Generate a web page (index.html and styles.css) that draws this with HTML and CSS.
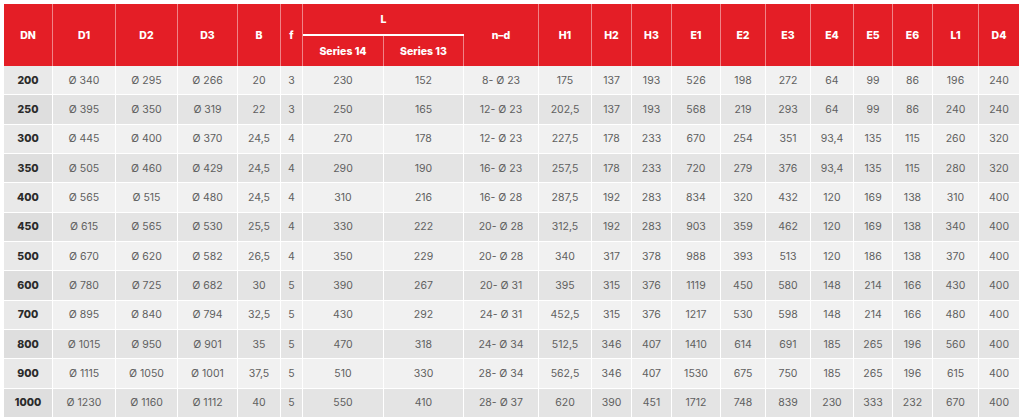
FILE: index.html
```html
<!DOCTYPE html>
<html lang="en">
<head>
<meta charset="utf-8">
<title>Dimensions table</title>
<link rel="stylesheet" href="styles.css">
</head>
<body>
<table class="dims">
  <colgroup>
    <col style="width:49px"><col style="width:63px"><col style="width:62px"><col style="width:60px"><col style="width:43px"><col style="width:22px"><col style="width:81px"><col style="width:80px"><col style="width:75px"><col style="width:53px"><col style="width:40px"><col style="width:40px"><col style="width:49px"><col style="width:45px"><col style="width:45px"><col style="width:43px"><col style="width:39px"><col style="width:40px"><col style="width:46px"><col style="width:40px">
  </colgroup>
  <thead>
    <tr class="h1">
      <th rowspan="2">DN</th><th rowspan="2">D1</th><th rowspan="2">D2</th><th rowspan="2">D3</th><th rowspan="2">B</th><th rowspan="2">f</th>
      <th colspan="2" class="group">L</th>
      <th rowspan="2">n–d</th><th rowspan="2">H1</th><th rowspan="2">H2</th><th rowspan="2">H3</th><th rowspan="2">E1</th><th rowspan="2">E2</th><th rowspan="2">E3</th><th rowspan="2">E4</th><th rowspan="2">E5</th><th rowspan="2">E6</th><th rowspan="2">L1</th><th rowspan="2" class="last">D4</th>
    </tr>
    <tr class="h2">
      <th>Series 14</th><th>Series 13</th>
    </tr>
  </thead>
  <tbody>
    <tr><td>200</td><td>Ø 340</td><td>Ø 295</td><td>Ø 266</td><td>20</td><td>3</td><td>230</td><td>152</td><td>8- Ø 23</td><td>175</td><td>137</td><td>193</td><td>526</td><td>198</td><td>272</td><td>64</td><td>99</td><td>86</td><td>196</td><td>240</td></tr>
    <tr><td>250</td><td>Ø 395</td><td>Ø 350</td><td>Ø 319</td><td>22</td><td>3</td><td>250</td><td>165</td><td>12- Ø 23</td><td>202,5</td><td>137</td><td>193</td><td>568</td><td>219</td><td>293</td><td>64</td><td>99</td><td>86</td><td>240</td><td>240</td></tr>
    <tr><td>300</td><td>Ø 445</td><td>Ø 400</td><td>Ø 370</td><td>24,5</td><td>4</td><td>270</td><td>178</td><td>12- Ø 23</td><td>227,5</td><td>178</td><td>233</td><td>670</td><td>254</td><td>351</td><td>93,4</td><td>135</td><td>115</td><td>260</td><td>320</td></tr>
    <tr><td>350</td><td>Ø 505</td><td>Ø 460</td><td>Ø 429</td><td>24,5</td><td>4</td><td>290</td><td>190</td><td>16- Ø 23</td><td>257,5</td><td>178</td><td>233</td><td>720</td><td>279</td><td>376</td><td>93,4</td><td>135</td><td>115</td><td>280</td><td>320</td></tr>
    <tr><td>400</td><td>Ø 565</td><td>Ø 515</td><td>Ø 480</td><td>24,5</td><td>4</td><td>310</td><td>216</td><td>16- Ø 28</td><td>287,5</td><td>192</td><td>283</td><td>834</td><td>320</td><td>432</td><td>120</td><td>169</td><td>138</td><td>310</td><td>400</td></tr>
    <tr><td>450</td><td>Ø 615</td><td>Ø 565</td><td>Ø 530</td><td>25,5</td><td>4</td><td>330</td><td>222</td><td>20- Ø 28</td><td>312,5</td><td>192</td><td>283</td><td>903</td><td>359</td><td>462</td><td>120</td><td>169</td><td>138</td><td>340</td><td>400</td></tr>
    <tr><td>500</td><td>Ø 670</td><td>Ø 620</td><td>Ø 582</td><td>26,5</td><td>4</td><td>350</td><td>229</td><td>20- Ø 28</td><td>340</td><td>317</td><td>378</td><td>988</td><td>393</td><td>513</td><td>120</td><td>186</td><td>138</td><td>370</td><td>400</td></tr>
    <tr><td>600</td><td>Ø 780</td><td>Ø 725</td><td>Ø 682</td><td>30</td><td>5</td><td>390</td><td>267</td><td>20- Ø 31</td><td>395</td><td>315</td><td>376</td><td>1119</td><td>450</td><td>580</td><td>148</td><td>214</td><td>166</td><td>430</td><td>400</td></tr>
    <tr><td>700</td><td>Ø 895</td><td>Ø 840</td><td>Ø 794</td><td>32,5</td><td>5</td><td>430</td><td>292</td><td>24- Ø 31</td><td>452,5</td><td>315</td><td>376</td><td>1217</td><td>530</td><td>598</td><td>148</td><td>214</td><td>166</td><td>480</td><td>400</td></tr>
    <tr><td>800</td><td>Ø 1015</td><td>Ø 950</td><td>Ø 901</td><td>35</td><td>5</td><td>470</td><td>318</td><td>24- Ø 34</td><td>512,5</td><td>346</td><td>407</td><td>1410</td><td>614</td><td>691</td><td>185</td><td>265</td><td>196</td><td>560</td><td>400</td></tr>
    <tr><td>900</td><td>Ø 1115</td><td>Ø 1050</td><td>Ø 1001</td><td>37,5</td><td>5</td><td>510</td><td>330</td><td>28- Ø 34</td><td>562,5</td><td>346</td><td>407</td><td>1530</td><td>675</td><td>750</td><td>185</td><td>265</td><td>196</td><td>615</td><td>400</td></tr>
    <tr><td>1000</td><td>Ø 1230</td><td>Ø 1160</td><td>Ø 1112</td><td>40</td><td>5</td><td>550</td><td>410</td><td>28- Ø 37</td><td>620</td><td>390</td><td>451</td><td>1712</td><td>748</td><td>839</td><td>230</td><td>333</td><td>232</td><td>670</td><td>400</td></tr>
  </tbody>
</table>
</body>
</html>
```
FILE: styles.css
```css
html, body {
  margin: 0;
  padding: 0;
  background: #ffffff;
}
body {
  padding: 4px 0 0 4px;
  font-family: "Inter", "Liberation Sans", sans-serif;
}
.dims {
  table-layout: fixed;
  width: 1015px;
  border-collapse: separate;
  border-spacing: 0;
}
.dims th {
  background: #e41e26;
  color: #ffffff;
  font-weight: 800;
  font-size: 10.5px;
  text-align: center;
  vertical-align: middle;
  padding: 0;
  border-right: 1px solid rgba(255, 255, 255, 0.45);
}
.dims th.last {
  border-right: 0;
}
.dims .h1 th {
  height: 30px;
}
.dims .h1 th.group {
  border-bottom: 2px solid #ffffff;
  border-right: 0;
}
.dims .h2 th {
  height: 30px;
  font-size: 10.5px;
}
.dims td {
  height: 28.33px;
  padding: 0;
  text-align: center;
  vertical-align: middle;
  font-size: 10.5px;
  color: #606060;
  background: #f1f1f1;
  border-right: 1px solid #ffffff;
  border-bottom: 1px solid #ffffff;
}
.dims td:last-child {
  border-right: 0;
}
.dims td:first-child {
  font-weight: 800;
  color: #2b2b2b;
  background: #e9e9e9;
}
.dims tbody tr:nth-child(even) td {
  background: #e4e4e4;
}
.dims tbody tr:nth-child(even) td:first-child {
  background: #dedede;
}
```
